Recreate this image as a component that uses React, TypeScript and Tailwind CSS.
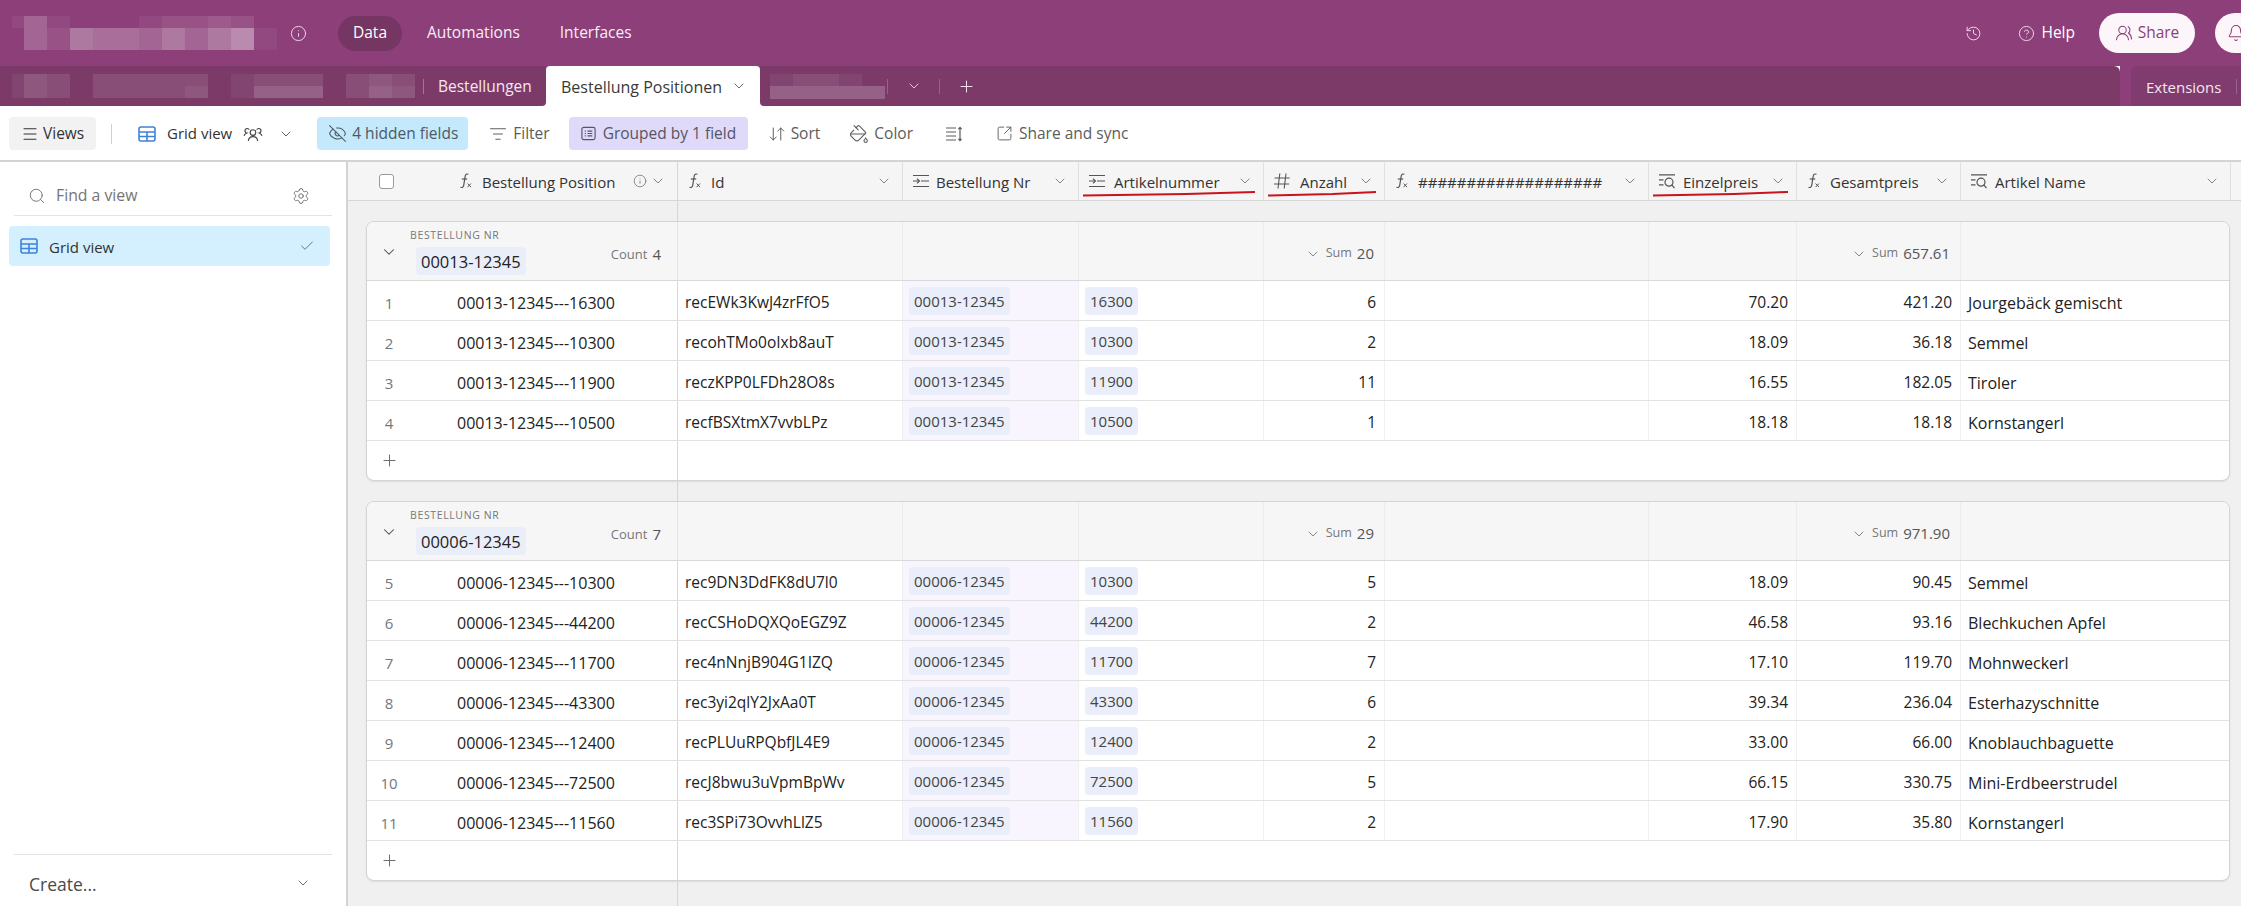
import { Bell, Check, ChevronDown, CircleHelp, EyeOff, History, Info, ListFilter, Menu, PaintBucket, Plus, Search, Settings, SquareArrowOutUpRight, UsersRound, ArrowDownUp } from 'lucide-react';

type IconProps = { className?: string };

const FxIcon = ({ className = '' }: IconProps) => (
  <svg viewBox="0 0 18 18" fill="none" stroke="currentColor" strokeWidth="1.2" className={`w-[18px] h-[18px] shrink-0 ${className}`}>
    <path d="M10.5 2.2c-1.8-.6-3 .2-3.3 2L5.7 13.4c-.3 1.7-1.5 2.5-3.2 1.9" />
    <path d="M3.8 7h5.4" />
    <path d="M9.6 11.5l3.4 3.6M13 11.5l-3.4 3.6" strokeWidth="1" />
  </svg>
);

const LinkIcon = ({ className = '' }: IconProps) => (
  <svg viewBox="0 0 18 18" fill="none" stroke="currentColor" strokeWidth="1.2" className={`w-[18px] h-[18px] shrink-0 ${className}`}>
    <path d="M1 3.5h16M9 9h8M1 14.5h16M1 9h6.5" />
    <path d="M5 6.6L7.4 9 5 11.4" />
  </svg>
);

const LookupIcon = ({ className = '' }: IconProps) => (
  <svg viewBox="0 0 18 18" fill="none" stroke="currentColor" strokeWidth="1.2" className={`w-[18px] h-[18px] shrink-0 ${className}`}>
    <path d="M1 2.8h16M1 7.8h4.5M1 12.8h4.5" />
    <circle cx="11" cy="10.2" r="4" />
    <path d="M13.9 13.2l2.6 2.8" />
  </svg>
);

const HashIcon = ({ className = '' }: IconProps) => (
  <svg viewBox="0 0 18 18" fill="none" stroke="currentColor" strokeWidth="1.1" className={`w-[18px] h-[18px] shrink-0 ${className}`}>
    <path d="M6.8 1.5L5 16.5M13 1.5l-1.8 15M1.5 6h15.2M1 12h15.2" />
  </svg>
);

const GridIcon = ({ className = '' }: IconProps) => (
  <svg viewBox="0 0 18 18" fill="none" stroke="#3f83d8" strokeWidth="1.6" className={`w-[18px] h-[18px] shrink-0 ${className}`}>
    <rect x="1" y="2" width="16" height="14" rx="2" />
    <path d="M1 7h16M1 11.5h16M9 7v9" />
  </svg>
);

const GroupIcon = () => (
  <svg viewBox="0 0 18 18" fill="none" stroke="currentColor" strokeWidth="1.2" className="w-[17px] h-[17px] shrink-0">
    <rect x="2" y="2.5" width="14" height="13" rx="2" />
    <path d="M5 6.5h1.2M5 9h1.2M5 11.5h1.2M8 6.5h5M8 9h5M8 11.5h5" />
  </svg>
);

const RowHeightIcon = () => (
  <svg viewBox="0 0 18 18" fill="none" stroke="currentColor" strokeWidth="1.2" className="w-[18px] h-[18px] shrink-0">
    <path d="M1 3h10M1 7h10M1 11h10M1 15h10M15 2.5v13M13.4 4.2L15 2.5l1.6 1.7M13.4 13.8l1.6 1.7 1.6-1.7" />
  </svg>
);

// three heads, the shared-view mark next to "Grid view"
const PeopleIcon = ({ className = '' }: IconProps) => (
  <svg viewBox="0 0 20 20" fill="none" stroke="currentColor" strokeWidth="1.15" className={`w-[20px] h-[20px] shrink-0 ${className}`}>
    <circle cx="10" cy="8.5" r="2.8" />
    <path d="M5.3 17c.3-2.8 2.2-4.4 4.7-4.4s4.4 1.6 4.7 4.4" />
    <path d="M6.3 5.6A2.3 2.3 0 1 0 3.8 9c-1.3.5-2.3 1.4-2.8 2.8M13.7 5.6A2.3 2.3 0 1 1 16.2 9c1.3.5 2.3 1.4 2.8 2.8" />
  </svg>
);

const Chev = ({ className = '' }: IconProps) => (
  <ChevronDown strokeWidth={1.25} className={`w-[16px] h-[16px] shrink-0 text-[#6f6f6f] ${className}`} />
);

// pixelated (blurred out) parts of the screenshot
const shades: Record<string, string> = {
  '.': 'bg-transparent',
  a: 'bg-white/5',
  b: 'bg-white/10',
  c: 'bg-white/15',
  d: 'bg-white/20',
  e: 'bg-white/25',
  f: 'bg-white/30',
  g: 'bg-white/40',
};

const Mosaic = ({ rows, narrowFirst }: { rows: { h: string; cells: string }[]; narrowFirst?: boolean }) => (
  <div className="flex flex-col shrink-0">
    {rows.map((row, i) => (
      <div key={i} className={`flex ${row.h}`}>
        {row.cells.split('').map((c, j) => (
          <div key={j} className={`h-full ${narrowFirst && j === 0 ? 'w-[12px]' : 'w-[23px]'} ${shades[c]}`} />
        ))}
      </div>
    ))}
  </div>
);

const TopBar = () => (
  <div className="flex items-center h-[66px] pl-[12px] text-[15.5px] text-white">
    <Mosaic
      narrowFirst
      rows={[
        { h: 'h-[12px]', cells: 'ada...abbcb.' },
        { h: 'h-[22px]', cells: '.dbfeedfdfga' },
      ]}
    />
    <Info strokeWidth={1.3} className="w-[17px] h-[17px] ml-[13px] text-[#f3dfee]" />
    <div className="ml-[31px] w-[64px] h-[35px] rounded-full bg-[#753664] flex items-center justify-center">Data</div>
    <div className="ml-[25px] text-[#f9eef6]">Automations</div>
    <div className="ml-[40px] text-[#f9eef6]">Interfaces</div>
    <div className="ml-auto flex items-center h-full">
      <History strokeWidth={1.3} className="w-[17px] h-[17px] text-[#f3dfee]" />
      <CircleHelp strokeWidth={1.3} className="ml-[36px] w-[17px] h-[17px] text-[#f3dfee]" />
      <span className="ml-[6px]">Help</span>
      <div className="ml-[24px] w-[96px] h-[40px] rounded-full bg-[#fcf5fa] text-[#8c3f78] flex items-center justify-center gap-[5px]">
        <UsersRound strokeWidth={1.4} className="w-[18px] h-[18px]" />
        Share
      </div>
      <div className="ml-[20px] w-[26px] h-[40px] rounded-l-full bg-[#fcf5fa] text-[#8c3f78] flex items-center pl-[12px] overflow-hidden">
        <Bell strokeWidth={1.4} className="w-[18px] h-[18px] shrink-0" />
      </div>
    </div>
  </div>
);

const TabBar = () => (
  <div className="flex h-[40px] text-[15.5px]">
    <div className="bg-white h-full">
      <div className="w-[546px] h-full bg-[#7b3a68] rounded-br-[4px] flex items-center pl-[12px]">
        <Mosaic
          narrowFirst
          rows={[
            { h: 'h-[12px]', cells: 'acb' },
            { h: 'h-[12px]', cells: 'acb' },
          ]}
        />
        <div className="ml-[23px]">
          <Mosaic
            rows={[
              { h: 'h-[12px]', cells: 'bbbbb' },
              { h: 'h-[12px]', cells: 'bbbbc' },
            ]}
          />
        </div>
        <div className="ml-[23px]">
          <Mosaic
            rows={[
              { h: 'h-[12px]', cells: 'abbb' },
              { h: 'h-[12px]', cells: 'addd' },
            ]}
          />
        </div>
        <div className="ml-[23px]">
          <Mosaic
            rows={[
              { h: 'h-[12px]', cells: 'bcb' },
              { h: 'h-[12px]', cells: 'bdc' },
            ]}
          />
        </div>
        <div className="ml-[8px] w-px h-[15px] bg-white/30" />
        <div className="ml-[14px] pt-[2px] text-[#f6e6f1]">Bestellungen</div>
      </div>
    </div>
    <div className="w-[214px] h-full bg-white rounded-t-[4px] flex items-center pl-[15px] text-[#3a3a3a] font-medium">
      <span className="pt-[2px] text-[16px]">Bestellung Positionen</span>
      <ChevronDown strokeWidth={1.3} className="ml-[9px] w-[16px] h-[16px] text-[#555]" />
    </div>
    <div className="bg-white h-full">
      <div className="w-[1360px] h-full bg-[#7b3a68] rounded-bl-[4px] rounded-tr-[6px] flex items-center pl-[10px]">
        <Mosaic
          rows={[
            { h: 'h-[12px]', cells: 'abba.' },
            { h: 'h-[13px]', cells: 'ddddd' },
          ]}
        />
        <div className="ml-[2px] w-px h-[15px] bg-white/20" />
        <ChevronDown strokeWidth={1.3} className="ml-[18px] w-[16px] h-[16px] text-[#f3dfee]" />
        <div className="ml-[17px] w-px h-[15px] bg-white/20" />
        <Plus strokeWidth={1.3} className="ml-[17px] w-[19px] h-[19px] text-[#f3dfee]" />
      </div>
    </div>
    <div className="ml-[11px] flex-1 h-full bg-[#803c6e] rounded-tl-[6px] flex items-center pl-[15px] text-[#f6e6f1] text-[15px]">
      <span className="pt-[2px]">Extensions</span>
      <div className="ml-auto mr-[4px] w-px h-[15px] bg-white/20" />
    </div>
  </div>
);

const Toolbar = () => (
  <div className="flex items-center h-[56px] border-b-2 border-[#d3d3d3] bg-white pl-[9px] pt-[1px] text-[15.5px] text-[#5c5c5c]">
    <div className="w-[87px] h-[33px] bg-[#f2f2f2] rounded-[4px] flex items-center pl-[12px] gap-[4px] text-[#333] font-medium">
      <Menu strokeWidth={1.4} className="w-[18px] h-[18px]" />
      Views
    </div>
    <div className="ml-[15px] w-px h-[20px] bg-[#d0d0d0]" />
    <GridIcon className="ml-[26px]" />
    <span className="ml-[11px] text-[#333] font-medium text-[15px]">Grid view</span>
    <PeopleIcon className="ml-[11px] text-[#444]" />
    <Chev className="ml-[15px] text-[#444]" />
    <div className="ml-[23px] w-[151px] h-[33px] bg-[#c4e9fc] rounded-[4px] flex items-center pl-[11px] gap-[5px] text-[#4d5a63]">
      <EyeOff strokeWidth={1.3} className="w-[19px] h-[19px]" />
      4 hidden fields
    </div>
    <ListFilter strokeWidth={1.3} className="ml-[21px] w-[18px] h-[18px]" />
    <span className="ml-[6px]">Filter</span>
    <div className="ml-[19px] w-[179px] h-[33px] bg-[#dfdafa] rounded-[4px] flex items-center pl-[11px] gap-[6px] text-[#575463]">
      <GroupIcon />
      Grouped by 1 field
    </div>
    <ArrowDownUp strokeWidth={1.3} className="ml-[20px] w-[18px] h-[18px]" />
    <span className="ml-[5px]">Sort</span>
    <PaintBucket strokeWidth={1.3} className="ml-[29px] w-[20px] h-[20px]" />
    <span className="ml-[5px]">Color</span>
    <div className="ml-[32px]"><RowHeightIcon /></div>
    <SquareArrowOutUpRight strokeWidth={1.3} className="ml-[33px] w-[17px] h-[17px]" />
    <span className="ml-[6px]">Share and sync</span>
  </div>
);

const Sidebar = () => (
  <aside className="w-[348px] shrink-0 border-r-2 border-[#d3d3d3] bg-white flex flex-col text-[15px]">
    <div className="mx-[14px] mt-[16px] h-[38px] border-b border-[#e3e3e3] flex items-center pl-[14px] pr-[22px] pb-[2px] text-[#757575]">
      <Search strokeWidth={1.3} className="w-[18px] h-[18px]" />
      <span className="ml-[10px] text-[15.8px]">Find a view</span>
      <Settings strokeWidth={1.2} className="ml-auto w-[18px] h-[18px] text-[#666]" />
    </div>
    <div className="mx-[9px] mt-[10px] w-[321px] h-[40px] bg-[#d4effd] rounded-[4px] flex items-center pl-[11px] pr-[15px] text-[#333] font-medium">
      <GridIcon />
      <span className="ml-[11px] pt-[2px]">Grid view</span>
      <Check strokeWidth={1.2} className="ml-auto w-[16px] h-[16px] text-[#555]" />
    </div>
    <div className="mt-auto mx-[14px] h-[52px] border-t border-[#e3e3e3] flex items-center pl-[15px] pr-[21px] pt-[8px] text-[#4a4a4a] font-medium text-[17.5px]">
      Create...
      <Chev className="ml-auto text-[#555] -mt-[4px]" />
    </div>
  </aside>
);

type Col = { name: string; width: string; icon: 'fx' | 'link' | 'lookup' | 'hash'; line?: boolean; gap: string };

const iconFor = (icon: Col['icon']) => {
  if (icon === 'fx') return <FxIcon />;
  if (icon === 'link') return <LinkIcon />;
  if (icon === 'lookup') return <LookupIcon />;
  return <HashIcon />;
};

const columns: Col[] = [
  { name: 'Id', width: 'w-[225px]', icon: 'fx', gap: 'gap-[6px]' },
  { name: 'Bestellung Nr', width: 'w-[176px]', icon: 'link', gap: 'gap-[6px]' },
  { name: 'Artikelnummer', width: 'w-[185px]', icon: 'link', gap: 'gap-[8px]', line: true },
  { name: 'Anzahl', width: 'w-[121px]', icon: 'hash', gap: 'gap-[9px]', line: true },
  { name: '###################', width: 'w-[264px]', icon: 'fx', gap: 'gap-[6px]' },
  { name: 'Einzelpreis', width: 'w-[148px]', icon: 'lookup', gap: 'gap-[7px]', line: true },
  { name: 'Gesamtpreis', width: 'w-[164px]', icon: 'fx', gap: 'gap-[6px]' },
  { name: 'Artikel Name', width: 'w-[270px]', icon: 'lookup', gap: 'gap-[7px]' },
];

const RedLine = () => (
  <svg viewBox="0 0 100 6" preserveAspectRatio="none" className="absolute left-[4px] bottom-[3px] h-[6px] w-[calc(100%-12px)]">
    <path d="M0 4.5 L60 3 L100 1" fill="none" stroke="#c9141c" strokeWidth="2" vectorEffect="non-scaling-stroke" />
  </svg>
);

const HeaderRow = () => (
  <div className="flex h-[39px] shrink-0 bg-[#f5f5f5] border-b border-[#d6d6d6] text-[15px] text-[#333]">
    <div className="w-[330px] shrink-0 border-r border-[#d6d6d6] flex items-center">
      <div className="ml-[31px] w-[15px] h-[15px] rounded-[3px] border border-[#9a9a9a] bg-white" />
      <FxIcon className="ml-[64px] text-[#555]" />
      <span className="ml-[6px] pt-[2px]">Bestellung Position</span>
      <Info strokeWidth={1.2} className="ml-auto w-[14px] h-[14px] text-[#666]" />
      <Chev className="ml-[3px] mr-[11px]" />
    </div>
    {columns.map((col) => (
      <div key={col.name} className={`${col.width} relative shrink-0 border-r border-[#e0e0e0] flex items-center pl-[9px] ${col.gap}`}>
        <span className="text-[#555] flex">{iconFor(col.icon)}</span>
        <span className="pt-[2px] whitespace-nowrap">{col.name}</span>
        <Chev className="ml-auto mr-[10px]" />
        {col.line && <RedLine />}
      </div>
    ))}
    <div className="flex-1" />
  </div>
);

type Row = { n: number; pos: string; id: string; nr: string; art: string; qty: string; price: string; total: string; name: string };

const group1: Row[] = [
  { n: 1, pos: '00013-12345---16300', id: 'recEWk3KwJ4zrFfO5', nr: '00013-12345', art: '16300', qty: '6', price: '70.20', total: '421.20', name: 'Jourgebäck gemischt' },
  { n: 2, pos: '00013-12345---10300', id: 'recohTMo0oIxb8auT', nr: '00013-12345', art: '10300', qty: '2', price: '18.09', total: '36.18', name: 'Semmel' },
  { n: 3, pos: '00013-12345---11900', id: 'reczKPP0LFDh28O8s', nr: '00013-12345', art: '11900', qty: '11', price: '16.55', total: '182.05', name: 'Tiroler' },
  { n: 4, pos: '00013-12345---10500', id: 'recfBSXtmX7vvbLPz', nr: '00013-12345', art: '10500', qty: '1', price: '18.18', total: '18.18', name: 'Kornstangerl' },
];

const group2: Row[] = [
  { n: 5, pos: '00006-12345---10300', id: 'rec9DN3DdFK8dU7l0', nr: '00006-12345', art: '10300', qty: '5', price: '18.09', total: '90.45', name: 'Semmel' },
  { n: 6, pos: '00006-12345---44200', id: 'recCSHoDQXQoEGZ9Z', nr: '00006-12345', art: '44200', qty: '2', price: '46.58', total: '93.16', name: 'Blechkuchen Apfel' },
  { n: 7, pos: '00006-12345---11700', id: 'rec4nNnjB904G1IZQ', nr: '00006-12345', art: '11700', qty: '7', price: '17.10', total: '119.70', name: 'Mohnweckerl' },
  { n: 8, pos: '00006-12345---43300', id: 'rec3yi2qlY2JxAa0T', nr: '00006-12345', art: '43300', qty: '6', price: '39.34', total: '236.04', name: 'Esterhazyschnitte' },
  { n: 9, pos: '00006-12345---12400', id: 'recPLUuRPQbfJL4E9', nr: '00006-12345', art: '12400', qty: '2', price: '33.00', total: '66.00', name: 'Knoblauchbaguette' },
  { n: 10, pos: '00006-12345---72500', id: 'recJ8bwu3uVpmBpWv', nr: '00006-12345', art: '72500', qty: '5', price: '66.15', total: '330.75', name: 'Mini-Erdbeerstrudel' },
  { n: 11, pos: '00006-12345---11560', id: 'rec3SPi73OvvhLlZ5', nr: '00006-12345', art: '11560', qty: '2', price: '17.90', total: '35.80', name: 'Kornstangerl' },
];

const DataRow = ({ row }: { row: Row }) => (
  <div className="flex h-[40px] border-b border-[#e2e2e2] bg-white text-[16px] text-[#222]">
    <div className="w-[311px] shrink-0 border-r border-[#d9d9d9] flex items-center pt-[5px]">
      <span className="w-[44px] text-center text-[#777] text-[15px]">{row.n}</span>
      <span className="ml-[46px] whitespace-nowrap">{row.pos}</span>
    </div>
    <div className="w-[225px] shrink-0 border-r border-[#f0f0f0] flex items-center pl-[7px] pt-[5px] whitespace-nowrap text-[15.5px]">{row.id}</div>
    <div className="w-[176px] shrink-0 border-r border-[#f0f0f0] bg-[#f8f5fe] flex items-center pl-[6px]">
      <span className="h-[28px] px-[5px] pt-[2px] rounded-[4px] bg-[#eaeefa] flex items-center text-[#444] text-[15px]">{row.nr}</span>
    </div>
    <div className="w-[185px] shrink-0 border-r border-[#f0f0f0] flex items-center pl-[6px]">
      <span className="h-[28px] px-[5px] pt-[2px] rounded-[4px] bg-[#eaeefa] flex items-center text-[#444] text-[15px]">{row.art}</span>
    </div>
    <div className="w-[121px] shrink-0 border-r border-[#f0f0f0] flex items-center justify-end pr-[8px] pt-[5px] text-[15.5px]">{row.qty}</div>
    <div className="w-[264px] shrink-0 border-r border-[#f0f0f0]" />
    <div className="w-[148px] shrink-0 border-r border-[#f0f0f0] flex items-center justify-end pr-[8px] pt-[5px] text-[15.5px]">{row.price}</div>
    <div className="w-[164px] shrink-0 border-r border-[#f0f0f0] flex items-center justify-end pr-[8px] pt-[5px] text-[15.5px]">{row.total}</div>
    <div className="flex-1 flex items-center pl-[7px] pt-[5px] whitespace-nowrap">{row.name}</div>
  </div>
);

const Summary = ({ value }: { value: string }) => (
  <div className="flex items-center justify-end h-full pr-[10px] pt-[5px]">
    <Chev className="w-[14px] h-[14px]" />
    <span className="ml-[5px] text-[12.5px] text-[#777]">Sum</span>
    <span className="ml-[5px] text-[15px] text-[#555]">{value}</span>
  </div>
);

const Group = ({ nr, count, sum, total, rows }: { nr: string; count: number; sum: string; total: string; rows: Row[] }) => (
  <div className="ml-[18px] w-[1864px] shrink-0 border border-[#d4d4d4] rounded-[8px] bg-white overflow-hidden shadow-[0_1px_2px_rgba(0,0,0,0.08)]">
    <div className="flex h-[59px] bg-[#f6f6f6] border-b border-[#d9d9d9]">
      <div className="w-[311px] shrink-0 border-r border-[#e3e3e3] relative flex">
        <ChevronDown strokeWidth={1.4} className="absolute left-[13px] top-[21px] w-[18px] h-[18px] text-[#444]" />
        <div className="ml-[43px] pt-[6px]">
          <div className="text-[10.5px] leading-[14px] tracking-[0.06em] text-[#777] whitespace-nowrap">BESTELLUNG NR</div>
          <div className="ml-[6px] mt-[5px] h-[28px] w-fit pl-[5px] pr-[5px] pt-[2px] rounded-[4px] bg-[#e9eef9] flex items-center text-[16.5px] font-medium text-[#222]">{nr}</div>
        </div>
        <div className="absolute right-[16px] top-[21px] flex items-center gap-[5px]">
          <span className="text-[13px] text-[#777]">Count</span>
          <span className="text-[15px] text-[#555]">{count}</span>
        </div>
      </div>
      <div className="w-[225px] shrink-0 border-r border-[#ececec]" />
      <div className="w-[176px] shrink-0 border-r border-[#ececec]" />
      <div className="w-[185px] shrink-0 border-r border-[#ececec]" />
      <div className="w-[121px] shrink-0 border-r border-[#ececec]"><Summary value={sum} /></div>
      <div className="w-[264px] shrink-0 border-r border-[#ececec]" />
      <div className="w-[148px] shrink-0 border-r border-[#ececec]" />
      <div className="w-[164px] shrink-0 border-r border-[#ececec]"><Summary value={total} /></div>
      <div className="flex-1" />
    </div>
    {rows.map((row) => (
      <DataRow key={row.n} row={row} />
    ))}
    <div className="flex h-[39px]">
      <div className="w-[311px] border-r border-[#d9d9d9] flex items-center pl-[13px]">
        <Plus strokeWidth={1.2} className="w-[19px] h-[19px] text-[#666]" />
      </div>
    </div>
  </div>
);

const Gap = ({ grow }: { grow?: boolean }) => (
  <div className={`flex ${grow ? 'flex-1' : 'h-[20px] shrink-0'}`}>
    <div className="w-[330px] border-r border-[#d6d6d6]" />
  </div>
);

export default function App() {
  return (
    <div className="w-[2241px] h-[906px] overflow-hidden flex flex-col bg-[#8c3f78] font-['Open_Sans',sans-serif]">
      <TopBar />
      <TabBar />
      <Toolbar />
      <div className="flex flex-1 min-h-0">
        <Sidebar />
        <main className="flex-1 flex flex-col min-w-0 bg-[#f0f0f0]">
          <HeaderRow />
          <Gap />
          <Group nr="00013-12345" count={4} sum="20" total="657.61" rows={group1} />
          <Gap />
          <Group nr="00006-12345" count={7} sum="29" total="971.90" rows={group2} />
          <Gap grow />
        </main>
      </div>
    </div>
  );
}
